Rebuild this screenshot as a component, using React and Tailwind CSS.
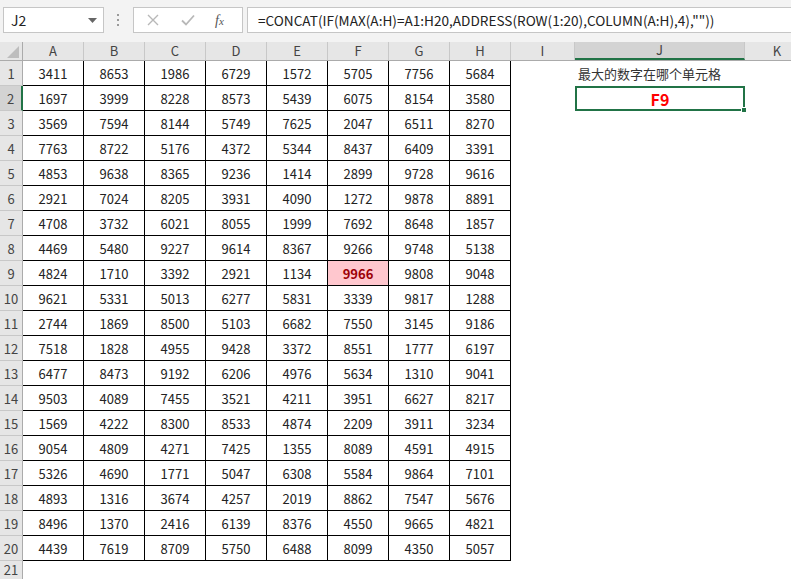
import React from "react";

const rows = [
  [3411, 8653, 1986, 6729, 1572, 5705, 7756, 5684],
  [1697, 3999, 8228, 8573, 5439, 6075, 8154, 3580],
  [3569, 7594, 8144, 5749, 7625, 2047, 6511, 8270],
  [7763, 8722, 5176, 4372, 5344, 8437, 6409, 3391],
  [4853, 9638, 8365, 9236, 1414, 2899, 9728, 9616],
  [2921, 7024, 8205, 3931, 4090, 1272, 9878, 8891],
  [4708, 3732, 6021, 8055, 1999, 7692, 8648, 1857],
  [4469, 5480, 9227, 9614, 8367, 9266, 9748, 5138],
  [4824, 1710, 3392, 2921, 1134, 9966, 9808, 9048],
  [9621, 5331, 5013, 6277, 5831, 3339, 9817, 1288],
  [2744, 1869, 8500, 5103, 6682, 7550, 3145, 9186],
  [7518, 1828, 4955, 9428, 3372, 8551, 1777, 6197],
  [6477, 8473, 9192, 6206, 4976, 5634, 1310, 9041],
  [9503, 4089, 7455, 3521, 4211, 3951, 6627, 8217],
  [1569, 4222, 8300, 8533, 4874, 2209, 3911, 3234],
  [9054, 4809, 4271, 7425, 1355, 8089, 4591, 4915],
  [5326, 4690, 1771, 5047, 6308, 5584, 9864, 7101],
  [4893, 1316, 3674, 4257, 2019, 8862, 7547, 5676],
  [8496, 1370, 2416, 6139, 8376, 4550, 9665, 4821],
  [4439, 7619, 8709, 5750, 6488, 8099, 4350, 5057],
];

const cols = ["A", "B", "C", "D", "E", "F", "G", "H"];
const font = { fontFamily: '"Noto Sans CJK SC", "Noto Sans", sans-serif' };

function TopBar() {
  return (
    <div className="flex h-[42px] items-start bg-[#f3f3f3] pt-[7px]">
      <div className="ml-[3px] flex h-[26px] w-[101px] items-center justify-between border border-[#c6c6c6] bg-white pl-[7px] pr-[6px] text-[14px] text-[#222]">
        <span>J2</span>
        <svg width="9" height="5" viewBox="0 0 9 5"><path d="M0 0h9L4.5 5z" fill="#666" /></svg>
      </div>
      <div className="ml-[13px] mr-[14px] flex h-[26px] flex-col items-center justify-center gap-[3px]">
        <span className="h-[2px] w-[2px] bg-[#9a9a9a]" />
        <span className="h-[2px] w-[2px] bg-[#9a9a9a]" />
        <span className="h-[2px] w-[2px] bg-[#9a9a9a]" />
      </div>
      <div className="flex h-[26px] w-[110px] items-center border border-[#c6c6c6] bg-white">
        <svg className="ml-[13px]" width="12" height="12" viewBox="0 0 12 12"><path d="M1 1l10 10M11 1L1 11" stroke="#b8b8b8" strokeWidth="1.4" /></svg>
        <svg className="ml-[22px]" width="14" height="12" viewBox="0 0 14 12"><path d="M1 6.5l4 4L13 1.5" stroke="#b8b8b8" strokeWidth="1.8" fill="none" /></svg>
        <span className="ml-[20px] text-[14px] italic text-[#555]" style={{ fontFamily: '"Liberation Serif", serif' }}>
          f<span className="text-[11px]">x</span>
        </span>
      </div>
      <div className="ml-[4px] flex h-[26px] flex-1 items-center border border-r-0 border-[#c6c6c6] bg-white pl-[10px] text-[13.6px] text-[#222]">
        =CONCAT(IF(MAX(A:H)=A1:H20,ADDRESS(ROW(1:20),COLUMN(A:H),4),""))
      </div>
    </div>
  );
}

function HeaderRow() {
  return (
    <div className="flex h-[19px] border-b border-[#ababab] bg-[#e6e6e6] text-[13px] text-[#444]">
      <div className="relative w-[23px] shrink-0 border-r border-[#ababab]">
        <svg className="absolute bottom-[2px] right-[3px]" width="12" height="12" viewBox="0 0 12 12"><path d="M12 0v12H0z" fill="#bdbdbd" /></svg>
      </div>
      {cols.map((c) => (
        <div key={c} className="flex w-[61px] shrink-0 items-center justify-center border-r border-[#c8c8c8]">{c}</div>
      ))}
      <div className="flex w-[64px] shrink-0 items-center justify-center border-r border-[#c8c8c8]">I</div>
      <div className="flex w-[170px] shrink-0 items-center justify-center border-b-2 border-r border-[#217346] border-r-[#c8c8c8] bg-[#d3d3d3]">J</div>
      <div className="flex w-[64px] shrink-0 items-center justify-center">K</div>
    </div>
  );
}

function DataRow({ r, i }) {
  const n = i + 1;
  const selected = n === 2;
  return (
    <div className="flex h-[25px] text-[13px]">
      <div
        className={
          "flex w-[23px] shrink-0 items-end justify-center border-b border-r pb-[2px] text-[#444] " +
          (selected ? "border-b-[#c8c8c8] border-r-2 border-r-[#217346] bg-[#d3d3d3]" : "border-b-[#c8c8c8] border-r-[#ababab] bg-[#e6e6e6]")
        }
      >
        {n}
      </div>
      {r.map((v, j) => {
        const hit = n === 9 && j === 5;
        return (
          <div
            key={j}
            className={
              "flex w-[61px] shrink-0 items-end justify-center border-b border-r border-black pb-[2px] " +
              (hit ? "bg-[#ffc7ce] font-bold text-[#9c0006]" : "text-[#222]")
            }
          >
            {v}
          </div>
        );
      })}
      <div className="w-[64px] shrink-0" />
      {n === 1 && (
        <div className="flex w-[170px] shrink-0 items-end pb-[3px] pl-[3px] text-[13px] text-[#333]">最大的数字在哪个单元格</div>
      )}
      {n === 2 && (
        <div className="relative flex w-[170px] shrink-0 items-center justify-center border-2 border-[#217346] text-[16px] font-bold text-[#ff0000]">
          F9
          <span className="absolute -bottom-[4px] -right-[4px] h-[6px] w-[6px] border border-white bg-[#217346]" />
        </div>
      )}
    </div>
  );
}

export default function App() {
  return (
    <div className="h-[579px] w-[791px] overflow-hidden bg-white" style={font}>
      <TopBar />
      <HeaderRow />
      {rows.map((r, i) => (
        <DataRow key={i} r={r} i={i} />
      ))}
      <div className="flex h-[18px] text-[13px]">
        <div className="flex w-[23px] shrink-0 items-center justify-center border-r border-[#ababab] bg-[#e6e6e6] text-[#444]">21</div>
      </div>
    </div>
  );
}
